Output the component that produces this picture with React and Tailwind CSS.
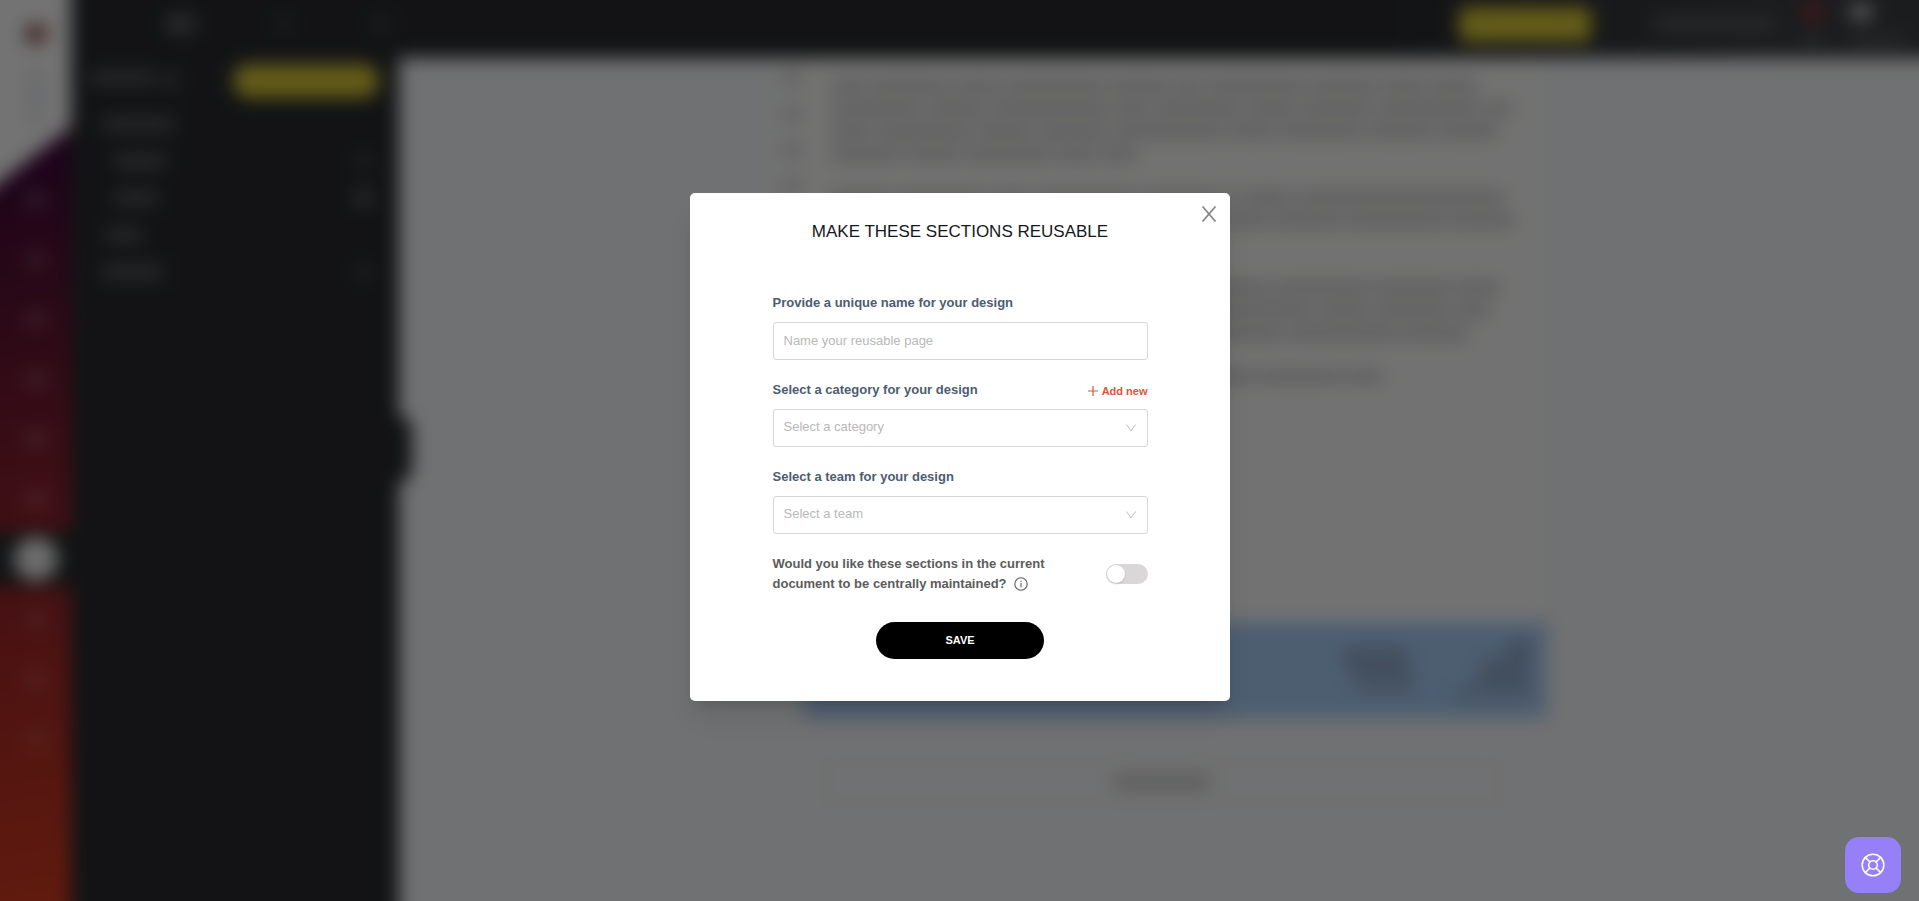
import { useState } from 'react';
import { LifeBuoy } from 'lucide-react';

const tree = [
  { id: 1, indent: 'ml-8', width: 70, action: false },
  { id: 2, indent: 'ml-11', width: 50, action: true },
  { id: 3, indent: 'ml-11', width: 42, action: true, strong: true },
  { id: 4, indent: 'ml-9', width: 34, action: false },
  { id: 5, indent: 'ml-8', width: 60, action: true },
];

const paragraphs = [
  {
    spacing: '',
    lines: [
      [34, 80, 46, 100, 62, 30, 96, 70, 44, 48],
      [90, 60, 120, 36, 88, 50, 72, 104, 28],
      [40, 96, 58, 70, 112, 48, 84, 66, 60],
      [70, 54, 88, 40, 38],
    ],
  },
  {
    spacing: 'mt-[30px]',
    lines: [
      [60, 90, 40, 104, 80, 14, 50, 206],
      [80, 50, 96, 60, 88, 42, 70, 100, 64],
    ],
  },
  {
    spacing: 'mt-[54px]',
    lines: [
      [50, 88, 70, 104, 46, 60, 96, 78, 44],
      [94, 60, 70, 40, 88, 110, 52, 76, 36],
      [66, 100, 48, 90, 56, 72, 110, 66],
    ],
  },
  { spacing: 'mt-[30px]', lines: [[58, 94, 70, 104, 30, 46, 84, 36]] },
];

const CloseIcon = () => (
  <svg viewBox="0 0 16 16" className="h-4 w-4" fill="none" stroke="currentColor" strokeWidth="1.8">
    <path d="M1.5 0.5 14.5 15.5M14.5 0.5 1.5 15.5" />
  </svg>
);

const ChevronIcon = () => (
  <svg
    viewBox="0 0 10 8"
    className="pointer-events-none absolute right-3 top-1/2 h-2 w-[10px] -translate-y-1/2 text-[#bfbfbf]"
    fill="none"
    stroke="currentColor"
  >
    <path d="M0.5 0.5 5 7 9.5 0.5" />
  </svg>
);

const PlusIcon = () => (
  <svg viewBox="0 0 10 10" className="h-[10px] w-[10px]" fill="none" stroke="currentColor" strokeWidth="1.2">
    <path d="M5 0V10M0 5H10" />
  </svg>
);

const InfoIcon = () => (
  <svg viewBox="0 0 14 14" className="h-[14px] w-[14px]" fill="none" stroke="currentColor">
    <circle cx="7" cy="7" r="6.2" strokeWidth="1.1" />
    <path d="M7 6V10.2" strokeWidth="1.1" />
    <circle cx="7" cy="4.2" r="0.7" fill="currentColor" stroke="none" />
  </svg>
);

const NavRail = () => (
  <nav className="flex w-[103px] shrink-0 flex-col bg-[linear-gradient(170deg,#40083c_20%,#5e1432_35%,#8a202f_55%,#b02c26_75%,#dc3e20_100%)]">
    <div className="flex h-[239px] flex-col items-center gap-6 bg-white pl-8 pt-14 [clip-path:polygon(0_0,100%_0,100%_159px,0_100%)]">
      <div className="h-5 w-6 rounded-full bg-gradient-to-r from-[#6b5559] to-[#c0605a]" />
      <div className="h-14 w-3 bg-gray-200" />
    </div>
    <div className="-mt-4 flex flex-col items-center gap-11 pl-8">
      {[1, 2, 3, 4, 5, 6].map((item) => (
        <div key={item} className="h-4 w-5 rounded bg-white/20" />
      ))}
    </div>
    <div className="mt-6 flex h-14 items-center justify-center bg-[#2a2d2f] pl-8">
      <div className="h-11 w-11 rounded-full bg-[#f0f0f0]" />
    </div>
    <div className="flex flex-col items-center gap-11 pl-8 pt-6">
      {[1, 2, 3].map((item) => (
        <div key={item} className="h-4 w-5 rounded bg-white/15" />
      ))}
    </div>
  </nav>
);

const TopBar = () => (
  <header className="flex h-[90px] shrink-0 items-start justify-between bg-gradient-to-r from-[#2a2c2f] from-70% to-[#3d3f43] to-90% pr-8 pt-8">
    <div className="flex items-center pl-24 pt-4">
      <div className="h-4 w-7 bg-[#66686b]" />
      <div className="ml-20 h-4 w-4 bg-[#3c3e42]" />
      <div className="ml-20 h-4 w-5 bg-[#3c3e42]" />
    </div>
    <div className="flex items-start pr-[14px]">
      <div className="mt-[7px] h-[35px] w-[132px] rounded-md bg-[#dccb38]" />
      <div className="ml-[62px] mt-[18px] h-3 w-[120px] bg-[#606265]" />
      <div className="ml-7 flex flex-col items-center gap-4">
        <div className="mt-1 h-4 w-5 rounded-full bg-[#a83038]" />
        <div className="h-2 w-6 bg-[#5b5d60]" />
      </div>
      <div className="ml-6 flex flex-col gap-4">
        <div className="mt-1 h-4 w-6 rounded-full bg-[#c5c7ca]" />
        <div className="h-2 w-14 bg-[#606265]" />
      </div>
    </div>
  </header>
);

const Sidebar = () => (
  <aside className="relative w-[328px] shrink-0 bg-[#2a2c2f]">
    <div className="flex items-start pl-5 pr-5 pt-[6px]">
      <div className="mt-2 h-3 w-16 bg-[#5d5f62]" />
      <div className="ml-2 mt-2 h-4 w-4 bg-[#4c4e52]" />
      <div className="ml-auto h-[34px] w-[146px] rounded-2xl bg-[#dccb38]" />
    </div>
    <div className="mt-[18px] flex flex-col gap-[21px] pr-7">
      {tree.map((row) => (
        <div key={row.id} className="flex h-4 items-center justify-between">
          <div className={`h-3 bg-[#606265] ${row.indent}`} style={{ width: row.width }} />
          {row.action && <div className={`h-4 w-4 ${row.strong ? 'bg-[#606265]' : 'bg-[#404246]'}`} />}
        </div>
      ))}
    </div>
    <div className="absolute left-full top-[358px] h-[66px] w-[13px] rounded-r-2xl bg-[#2a2c2f]" />
  </aside>
);

const Document = () => (
  <div className="mx-auto w-[776px]">
    <div className="flex h-[564px] border-x border-[#d8f0e0] bg-[#fdfdfc]">
      <div className="flex w-8 shrink-0 flex-col items-end gap-5 pr-1 pt-3">
        {[1, 2, 3, 4].map((mark) => (
          <div key={mark} className="h-4 w-4 bg-[#d6d6d6]" />
        ))}
      </div>
      <div className="overflow-hidden pl-7 pr-4 pt-[21px]">
        {paragraphs.map((paragraph, i) => (
          <div key={i} className={`flex flex-col gap-[10px] ${paragraph.spacing}`}>
            {paragraph.lines.map((words, j) => (
              <div key={j} className="flex gap-1">
                {words.map((width, k) => (
                  <div key={k} className="h-[13px] shrink-0 bg-[#cfcfcf]" style={{ width }} />
                ))}
              </div>
            ))}
          </div>
        ))}
      </div>
    </div>
    <div className="ml-8 flex h-24 items-center justify-end gap-9 bg-[#acd0fb] pr-4">
      <div className="flex flex-col items-start gap-1">
        <div className="h-3 w-16 bg-[#8ba4c0]" />
        <div className="ml-1 h-3 w-16 bg-[#8ba4c0]" />
        <div className="ml-4 h-3 w-14 bg-[#95aecb]" />
      </div>
      <div className="flex flex-col items-end gap-1">
        <div className="h-3 w-6 bg-[#849bb8]" />
        <div className="h-3 w-12 bg-[#8ba4c0]" />
        <div className="h-3 w-14 bg-[#8ba4c0]" />
        <div className="h-2 w-20 bg-[#95aecb]" />
      </div>
    </div>
    <div className="ml-14 mr-[50px] mt-11 flex h-10 items-center justify-center border border-[#ececed]">
      <div className="h-4 w-24 bg-[#cfcfcf]" />
    </div>
  </div>
);

const Field = ({ id, label, action, children }) => (
  <div>
    <div className="flex h-6 items-center justify-between">
      <label htmlFor={id} className="text-[13px] font-bold text-[#4c5d70]">
        {label}
      </label>
      {action}
    </div>
    <div className="relative mt-[7px]">{children}</div>
  </div>
);

const controlClass =
  'block h-[38px] w-full appearance-none rounded-[3px] border border-[#d6d6d6] bg-white px-[10px] pb-[2px] text-[13px] outline-none placeholder:text-[#b8b8b8]';

const ReusableModal = () => {
  const [name, setName] = useState('');
  const [category, setCategory] = useState('');
  const [team, setTeam] = useState('');
  const [maintained, setMaintained] = useState(false);

  return (
    <div
      role="dialog"
      aria-labelledby="modal-title"
      className="relative w-[540px] rounded-[5px] bg-white pb-[42px] pl-[83px] pr-[82px] pt-[27px] shadow-xl"
    >
      <button type="button" aria-label="Close" className="absolute right-[13px] top-[13px] text-[#888888]">
        <CloseIcon />
      </button>
      <h2 id="modal-title" className="text-center text-[17px] leading-6 text-[#14181d]">
        MAKE THESE SECTIONS REUSABLE
      </h2>

      <form className="mt-[47px]" onSubmit={(e) => e.preventDefault()}>
        <div className="flex flex-col gap-[18px]">
          <Field id="name" label="Provide a unique name for your design">
            <input
              id="name"
              type="text"
              value={name}
              onChange={(e) => setName(e.target.value)}
              placeholder="Name your reusable page"
              className={controlClass}
            />
          </Field>
          <Field
            id="category"
            label="Select a category for your design"
            action={
              <button type="button" className="flex items-center gap-1 pt-[2px] text-[11px] font-bold text-[#e2513b]">
                <PlusIcon />
                Add new
              </button>
            }
          >
            <select
              id="category"
              value={category}
              onChange={(e) => setCategory(e.target.value)}
              className={`${controlClass} text-[#b8b8b8]`}
            >
              <option value="">Select a category</option>
            </select>
            <ChevronIcon />
          </Field>
          <Field id="team" label="Select a team for your design">
            <select
              id="team"
              value={team}
              onChange={(e) => setTeam(e.target.value)}
              className={`${controlClass} text-[#b8b8b8]`}
            >
              <option value="">Select a team</option>
            </select>
            <ChevronIcon />
          </Field>
        </div>

        <div className="mt-5 flex items-center justify-between">
          <label htmlFor="maintained" className="w-[290px] text-[13px] font-bold leading-5 text-[#5c5c5c]">
            Would you like these sections in the current document to be centrally maintained?{' '}
            <span className="ml-1 inline-block align-text-bottom">
              <InfoIcon />
            </span>
          </label>
          <input
            id="maintained"
            type="checkbox"
            checked={maintained}
            onChange={(e) => setMaintained(e.target.checked)}
            className="h-5 w-[42px] appearance-none rounded-full bg-[#dad7d9] p-px before:block before:h-[18px] before:w-[18px] before:rounded-full before:bg-white before:shadow checked:bg-black checked:before:translate-x-[22px]"
          />
        </div>

        <button
          type="submit"
          className="mx-auto mt-7 block h-[37px] w-[168px] rounded-full bg-black text-[11px] font-bold text-white"
        >
          SAVE
        </button>
      </form>
    </div>
  );
};

export default function App() {
  return (
    <div className="relative h-screen overflow-hidden bg-[#f9fafc] font-['Liberation_Sans',Arial,sans-serif]">
      {/* bleeds past the window so the blur has no soft edge on screen */}
      <div className="absolute -inset-8 flex blur-[9px]" aria-hidden="true">
        <NavRail />
        <div className="flex min-w-0 flex-1 flex-col">
          <TopBar />
          <div className="flex min-h-0 flex-1">
            <Sidebar />
            <main className="flex-1 bg-[#f9fafc] pr-8">
              <Document />
            </main>
          </div>
        </div>
      </div>

      <div className="absolute inset-0 flex items-center justify-center bg-black/55 pb-[7px]">
        <ReusableModal />
      </div>

      <button
        type="button"
        aria-label="Help"
        className="absolute bottom-2 right-[18px] flex h-14 w-14 items-center justify-center rounded-[14px] bg-[#9580f8] text-white"
      >
        <LifeBuoy size={26} strokeWidth={1.4} />
      </button>
    </div>
  );
}
